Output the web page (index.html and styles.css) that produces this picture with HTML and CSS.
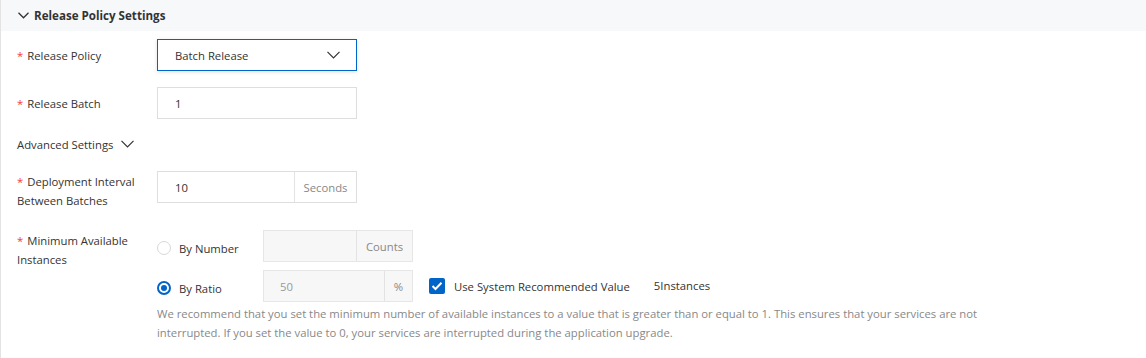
FILE: index.html
```html
<!doctype html>
<html lang="en">
<head>
	<meta charset="UTF-8">
	<title>Release Policy Settings</title>
	<link rel="stylesheet" href="styles.css">
</head>
<body>
	<div class="panel">
		<div class="panel-head">
			<svg class="head-arrow" width="11" height="7" viewBox="0 0 11 7"><path d="M0.5 0.8 L5.5 5.8 L10.5 0.8" fill="none" stroke="#333" stroke-width="1.3"/></svg>
			<span>Release Policy Settings</span>
		</div>
		<div class="panel-body">
			<div class="form-item">
				<div class="label"><i>*</i>Release Policy</div>
				<div class="select">
					<span>Batch Release</span>
					<svg width="13" height="8" viewBox="0 0 13 8"><path d="M0.5 0.8 L6.5 6.8 L12.5 0.8" fill="none" stroke="#333" stroke-width="1.2"/></svg>
				</div>
			</div>
			<div class="form-item">
				<div class="label"><i>*</i>Release Batch</div>
				<div class="input"><span>1</span></div>
			</div>
			<div class="advanced">
				Advanced Settings
				<svg width="13" height="8" viewBox="0 0 13 8"><path d="M0.5 0.8 L6.5 6.8 L12.5 0.8" fill="none" stroke="#333" stroke-width="1.2"/></svg>
			</div>
			<div class="form-item item-interval">
				<div class="label multi"><i>*</i>Deployment Interval Between Batches</div>
				<div class="input group">
					<span class="val">10</span>
					<span class="addon addon-sec">Seconds</span>
				</div>
			</div>
			<div class="form-item">
				<div class="label multi"><i>*</i>Minimum Available Instances</div>
				<div class="options">
					<div class="option">
						<label class="radio"><span class="dot"></span>By Number</label>
						<div class="input group disabled small">
							<span class="val"></span>
							<span class="addon addon-cnt">Counts</span>
						</div>
					</div>
					<div class="option option-ratio">
						<label class="radio"><span class="dot on"></span>By Ratio</label>
						<div class="input group disabled small">
							<span class="val">50</span>
							<span class="addon addon-pct">%</span>
						</div>
						<label class="check">
							<span class="box"><svg width="12" height="10" viewBox="0 0 12 10"><path d="M1.5 5 L4.5 8 L10.5 1.8" fill="none" stroke="#fff" stroke-width="2"/></svg></span>
							Use System Recommended Value
						</label>
						<span class="count">5Instances</span>
					</div>
					<p class="help">We recommend that you set the minimum number of available instances to a value that is greater than or equal to 1. This ensures that your services are not interrupted. If you set the value to 0, your services are interrupted during the application upgrade.</p>
				</div>
			</div>
		</div>
	</div>
</body>
</html>
```

FILE: styles.css
```css
body,p{
	margin:0;
	padding:0;
}
*{
	box-sizing:border-box;
}
body{
	background:#fff;
	font-family:"Open Sans","Noto Sans",sans-serif;
	font-size:11.3px;
	color:#333;
}
.panel{
	border-left:1px solid #e3e3e3;
	height:358px;
}
.panel-head{
	height:31px;
	background:#f7f8fa;
	display:flex;
	align-items:center;
	padding-left:17px;
	font-weight:bold;
	font-size:11.6px;
	color:#333;
}
.head-arrow{
	margin-right:5px;
}
.panel-body{
	padding-top:8px;
}
.form-item{
	display:flex;
	align-items:flex-start;
	margin-bottom:16px;
}
.label{
	width:156px;
	padding-left:16px;
	padding-right:14px;
	line-height:18px;
	padding-top:8px;
	color:#333;
}
.label.multi{
	padding-top:1px;
	line-height:19px;
	height:39px;
}
.label i{
	font-style:normal;
	color:#f23c3c;
	margin-right:4px;
}
.select,.input{
	width:200px;
	height:32px;
	border:1px solid #dedede;
	display:flex;
	align-items:center;
	padding:0 16px 0 17px;
	background:#fff;
}
.select{
	border-color:#0064c8;
	box-shadow:0 1px 4px rgba(0,0,0,0.13);
	justify-content:space-between;
}
.input.group{
	padding:0;
}
.group .val{
	flex:1;
	padding-left:17px;
}
.group .addon{
	height:100%;
	display:flex;
	align-items:center;
	justify-content:center;
	border-left:1px solid #e3e3e3;
	color:#888;
}
.addon-sec{
	width:62px;
}
.input.small{
	width:150px;
}
.disabled{
	background:#f7f7f7;
	border-color:#e6e6e6;
	color:#999;
}
.disabled .val{
	padding-left:16px;
}
.addon-cnt{
	width:56px;
}
.addon-pct{
	width:28px;
}
.advanced{
	display:flex;
	align-items:center;
	padding-left:16px;
	height:18px;
	margin-bottom:18px;
}
.advanced svg{
	margin-left:8px;
}
.item-interval{
	margin-bottom:20px;
}
.options{
	width:830px;
}
.option{
	display:flex;
	align-items:center;
}
.option-ratio{
	margin-top:8px;
}
.radio{
	width:106px;
	display:flex;
	align-items:center;
	padding-top:4px;
}
.dot{
	width:14px;
	height:14px;
	border-radius:50%;
	border:1px solid #d8d8d8;
	margin-right:8px;
	background:#fff;
}
.dot.on{
	border:2px solid #0064c8;
	position:relative;
}
.dot.on:after{
	content:"";
	position:absolute;
	left:2px;
	top:2px;
	width:6px;
	height:6px;
	border-radius:50%;
	background:#0064c8;
}
.check{
	display:flex;
	align-items:center;
	margin-left:16px;
}
.box{
	width:16px;
	height:16px;
	background:#0064c8;
	border-radius:2px;
	display:flex;
	align-items:center;
	justify-content:center;
	margin-right:9px;
}
.count{
	margin-left:24px;
	margin-top:-2px;
}
.help{
	color:#888;
	line-height:19px;
	margin-top:2px;
}
```
